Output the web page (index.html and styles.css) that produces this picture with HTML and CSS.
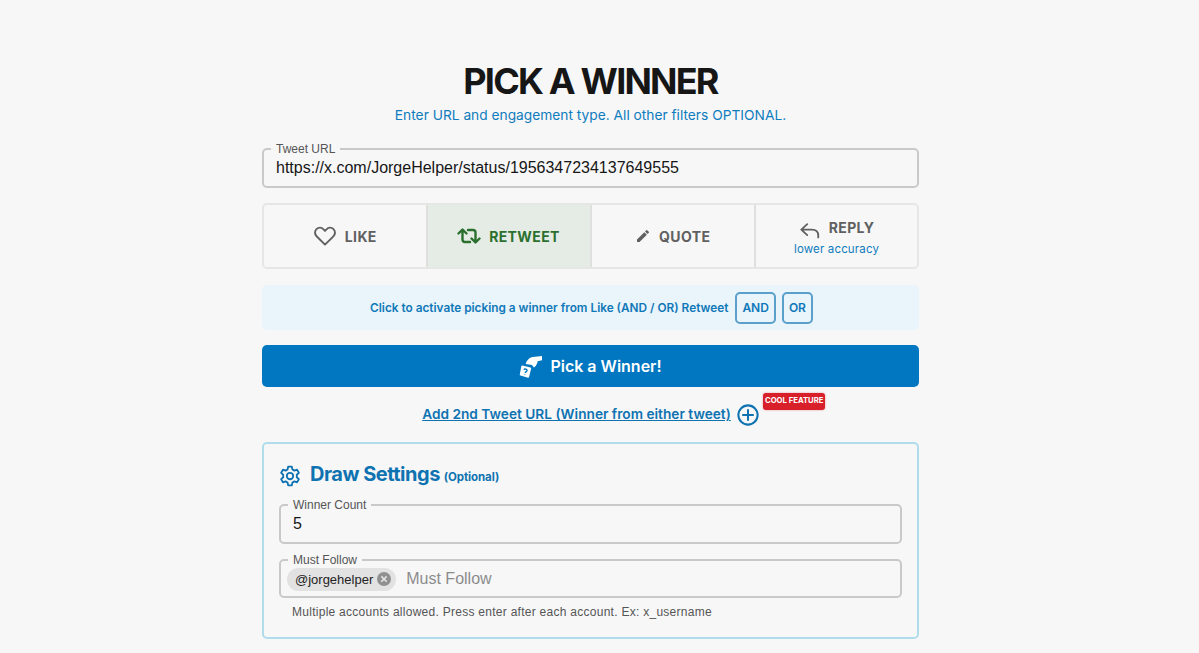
FILE: index.html
```html
<!DOCTYPE html>
<html lang="en">

<head>
    <meta charset="UTF-8">
    <meta name="viewport" content="width=device-width, initial-scale=1.0">
    <link rel="stylesheet" href="styles.css">
    <title>Pick a Winner</title>
</head>

<body>
    <main class="page">

        <h1 class="title">PICK A WINNER</h1>
        <p class="subtitle">Enter URL and engagement type. All other filters OPTIONAL.</p>

        <fieldset class="field url-field">
            <legend>Tweet URL</legend>
            <div class="field-value">https://x.com/JorgeHelper/status/1956347234137649555</div>
        </fieldset>

        <div class="engagements">
            <button class="engagement" type="button">
                <span class="engagement-row">
                    <svg class="icon-like" viewBox="0 0 24 24" fill="none" stroke="currentColor" stroke-width="1.9" stroke-linejoin="round">
                        <path d="M12 20.6 3.6 12.3C1.5 10.2 1.5 7 3.5 5.1 5.5 3.3 8.6 3.4 10.5 5.3L12 6.9l1.5-1.6c1.9-1.9 5-2 7-.2 2 1.9 2 5.1-.1 7.2z" />
                    </svg>
                    LIKE
                </span>
            </button>
            <button class="engagement active" type="button">
                <span class="engagement-row">
                    <svg class="icon-retweet" viewBox="0 0 24 24" fill="none" stroke="currentColor" stroke-width="2.4" stroke-linecap="round" stroke-linejoin="round">
                        <path d="M1.5 9.5 5.5 5.5l4 4M5.5 6v9.5A2.5 2.5 0 0 0 8 18h5" />
                        <path d="M22.5 14.5l-4 4-4-4M18.5 18V8.5A2.5 2.5 0 0 0 16 6h-5" />
                    </svg>
                    RETWEET
                </span>
            </button>
            <button class="engagement" type="button">
                <span class="engagement-row">
                    <svg class="icon-quote" viewBox="0 0 24 24" fill="currentColor">
                        <path d="M3 17.2V21h3.8L17.8 10 14 6.2zM20.7 7.1a1 1 0 0 0 0-1.4l-2.4-2.4a1 1 0 0 0-1.4 0L15 5.2 18.8 9z" />
                    </svg>
                    QUOTE
                </span>
            </button>
            <button class="engagement" type="button">
                <span class="engagement-row">
                    <svg class="icon-reply" viewBox="0 0 24 24" fill="none" stroke="currentColor" stroke-width="2" stroke-linecap="round" stroke-linejoin="round">
                        <path d="M9 4.5 2.5 10.500 9 16.5M3 10.5h11c4.500 0 7 2.500 7 6.500v2" />
                    </svg>
                    REPLY
                </span>
                <span class="engagement-note">lower accuracy</span>
            </button>
        </div>

        <div class="logic-bar">
            <span>Click to activate picking a winner from Like (AND / OR) Retweet</span>
            <button class="logic-btn" type="button">AND</button>
            <button class="logic-btn" type="button">OR</button>
        </div>

        <button class="pick-btn" type="button">
            <svg class="icon-pick" viewBox="0 0 24 24" fill="#fff">
                <path d="M7 9.5C8 5.5 11 2.500 14.500 2.200L24 1v4.500L19.500 6.500C19 9.500 17.500 12 15.500 13L13.500 10.500 7 9.500z" />
                <path d="M3.500 11 12 13c.5.100.8.600.7 1.100L10.500 23c-.1.500-.6.800-1.100.7L1.500 21.500c-.5-.1-.8-.6-.7-1.100L2.400 11.700c.1-.5.600-.8 1.100-.7z" />
                <path d="M5.300 15.500c.4-1.500 3.500-1 3.100.8-.2 1-1.700 1.100-2 2.300M6 20.200v.4" fill="none" stroke="#0077c0" stroke-width="1.4" />
            </svg>
            Pick a Winner!
        </button>

        <div class="second-tweet">
            <a href="#" class="second-link">Add 2nd Tweet URL (Winner from either tweet)</a>
            <svg class="icon-plus" viewBox="0 0 24 24" fill="none" stroke="currentColor" stroke-width="2.2" stroke-linecap="round">
                <circle cx="12" cy="12" r="10.5" />
                <path d="M12 6.500v11M6.500 12h11" />
            </svg>
            <span class="badge">COOL FEATURE</span>
        </div>

        <section class="settings">
            <h2 class="settings-title">
                <svg class="icon-gear" viewBox="0 0 24 24" fill="none" stroke="currentColor" stroke-width="2" stroke-linejoin="round">
                    <path d="M10 1.800h4l.6 3 2.200 1.300 2.900-1 2 3.500-2.300 2c.1.900.1 1.900 0 2.800l2.300 2-2 3.500-2.900-1-2.200 1.300-.6 3h-4l-.6-3-2.200-1.300-2.900 1-2-3.500 2.300-2c-.1-.9-.1-1.900 0-2.800l-2.300-2 2-3.500 2.900 1 2.200-1.300z" />
                    <circle cx="12" cy="12" r="3.5" />
                </svg>
                Draw Settings
                <small>(Optional)</small>
            </h2>

            <fieldset class="field count-field">
                <legend>Winner Count</legend>
                <div class="field-value">5</div>
            </fieldset>

            <fieldset class="field follow-field">
                <legend>Must Follow</legend>
                <div class="chip-row">
                    <span class="chip">
                        @jorgehelper
                        <svg class="icon-close" viewBox="0 0 24 24">
                            <circle cx="12" cy="12" r="12" fill="#909090" />
                            <path d="M7.5 7.5l9 9M16.5 7.5l-9 9" stroke="#e2e2e2" stroke-width="2.6" />
                        </svg>
                    </span>
                    <span class="placeholder">Must Follow</span>
                </div>
            </fieldset>
            <p class="helper">Multiple accounts allowed. Press enter after each account. Ex: x_username</p>
        </section>

    </main>
</body>

</html>
```

FILE: styles.css
```css
html {
    box-sizing: border-box;
}

*,
*::before,
*::after {
    margin: 0;
    padding: 0;
    box-sizing: inherit;
}

body {
    height: 653px;
    overflow: hidden;
    background-color: #f7f7f8;
    font-family: Inter, "Liberation Sans", sans-serif;
    color: #161616;
}

.page {
    width: 657px;
    margin-left: 262px;
    padding-top: 59px;
}

.title {
    font-size: 36px;
    line-height: 44px;
    font-weight: 700;
    letter-spacing: -1.8px;
    text-align: center;
}

.subtitle {
    margin-top: 2px;
    font-size: 13.75px;
    line-height: 20px;
    color: #0f7cbd;
    text-align: center;
}

.field {
    border: 2px solid #c9c9c9;
    border-radius: 5px;
    padding: 0 12px;
    font-family: "Liberation Sans", sans-serif;
}

.field legend {
    margin-left: -5px;
    padding: 0 5px;
    font-size: 12px;
    line-height: 12px;
    color: #555;
}

.field-value {
    padding: 3px 0 8px;
    font-size: 16px;
    line-height: 20px;
}

.url-field {
    margin-top: 18px;
}

.engagements {
    display: grid;
    grid-template-columns: 163.5px 164px 164.5px 1fr;
    height: 66px;
    margin-top: 15px;
    border: 2px solid #e6e6e6;
    border-radius: 5px;
    overflow: hidden;
}

.engagement {
    display: flex;
    flex-direction: column;
    align-items: center;
    justify-content: center;
    border: none;
    border-right: 2px solid #dfdfdf;
    background: none;
    font-family: inherit;
    font-size: 14px;
    font-weight: 700;
    letter-spacing: 0.4px;
    color: #606060;
}

.engagement:last-child {
    border-right: none;
}

.engagement.active {
    background-color: #e5ece6;
    color: #2c702f;
}

.engagement-row {
    display: flex;
    align-items: center;
    gap: 8px;
}

.engagement-note {
    margin-top: 4px;
    font-size: 11.5px;
    line-height: 14px;
    font-weight: 400;
    letter-spacing: 0.15px;
    color: #0f7cbd;
}

.icon-like {
    width: 24px;
    height: 24px;
}

.icon-retweet {
    width: 24px;
    height: 24px;
}

.icon-quote {
    width: 16px;
    height: 16px;
}

.icon-reply {
    width: 22px;
    height: 22px;
    transform: translateY(4px);
}

.logic-bar {
    display: flex;
    align-items: center;
    justify-content: center;
    gap: 6px;
    height: 45px;
    margin-top: 16px;
    padding-left: 2px;
    border-radius: 5px;
    background-color: #e9f4fb;
    font-size: 11.8px;
    font-weight: 600;
    color: #0f78b8;
}

.logic-bar span {
    margin-right: 1px;
}

.logic-btn {
    height: 32px;
    padding: 0 5px;
    border: 2px solid #5ba0cb;
    border-radius: 5px;
    background: none;
    font-family: inherit;
    font-size: 12px;
    font-weight: 600;
    color: #0f78b8;
}

.pick-btn {
    display: flex;
    align-items: center;
    justify-content: center;
    gap: 8px;
    width: 100%;
    height: 42px;
    margin-top: 15px;
    border: none;
    border-radius: 5px;
    background-color: #0077c0;
    font-family: inherit;
    font-size: 16px;
    font-weight: 600;
    color: #fff;
}

.icon-pick {
    width: 23px;
    height: 23px;
}

.second-tweet {
    position: relative;
    display: flex;
    align-items: center;
    justify-content: center;
    gap: 6px;
    height: 24px;
    margin-top: 15px;
    color: #0f73b1;
}

.second-link {
    font-size: 13.7px;
    font-weight: 600;
    color: inherit;
}

.icon-plus {
    width: 22px;
    height: 22px;
    margin-top: 2px;
}

.badge {
    position: absolute;
    left: 501px;
    top: -9px;
    padding: 0 2px;
    height: 17px;
    border-radius: 3px;
    background-color: #d8202a;
    font-size: 7.7px;
    line-height: 16px;
    font-weight: 700;
    color: #fff;
    box-shadow: 0 0 2px rgba(216, 32, 42, 0.5);
}

.settings {
    height: 197px;
    margin-top: 16px;
    padding: 16px 15px 0;
    border: 2px solid #b0dcec;
    border-radius: 5px;
}

.settings-title {
    display: flex;
    align-items: baseline;
    gap: 4px;
    height: 32px;
    font-size: 20px;
    line-height: 28px;
    font-weight: 700;
    letter-spacing: -0.5px;
    color: #0f73b1;
}

.settings-title small {
    font-size: 11.5px;
    font-weight: 700;
    letter-spacing: -0.1px;
}

.icon-gear {
    align-self: center;
    width: 22px;
    height: 22px;
    margin-right: 5px;
}

.count-field {
    margin-top: 7px;
}

.follow-field {
    margin-top: 10px;
    padding: 0 6px;
}

.follow-field legend {
    margin-left: 1px;
}

.chip-row {
    display: flex;
    align-items: center;
    gap: 10px;
    height: 30px;
    padding-bottom: 4px;
}

.chip {
    display: flex;
    align-items: center;
    gap: 4px;
    height: 23px;
    padding: 0 5px 0 8px;
    border-radius: 12px;
    background-color: #e2e2e2;
    font-size: 13px;
    color: #222;
}

.icon-close {
    width: 14px;
    height: 14px;
}

.placeholder {
    font-size: 16px;
    color: #8c8c8c;
}

.helper {
    margin-top: 6px;
    padding-left: 13px;
    font-family: "Liberation Sans", sans-serif;
    font-size: 12px;
    line-height: 16px;
    letter-spacing: 0.27px;
    color: #555;
}
```
